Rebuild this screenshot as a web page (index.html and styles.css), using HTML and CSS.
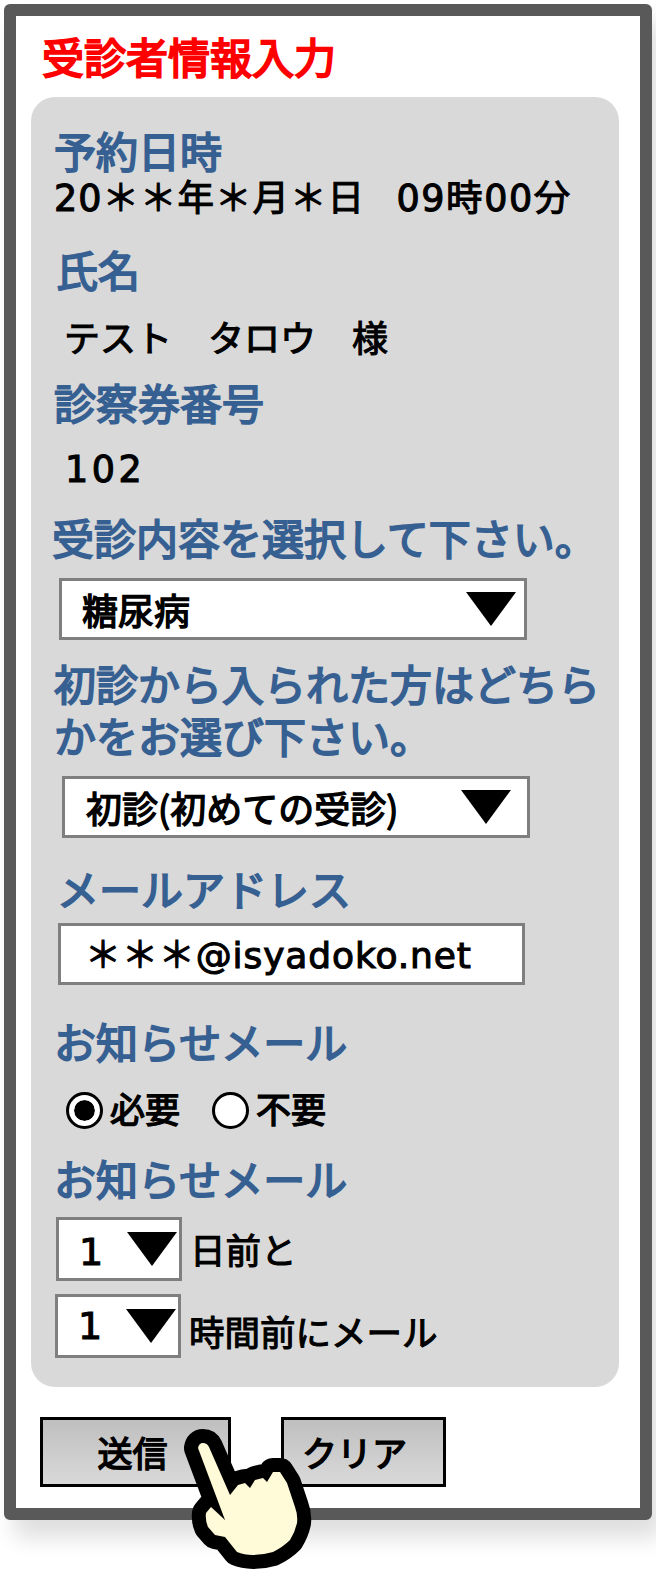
FILE: index.html
```html
<!doctype html>
<html lang="ja">

<head>
  <title>受診者情報入力</title>
  <meta charset="utf-8">
  <meta name="viewport" content="width=device-width, initial-scale=1">
  <link rel="stylesheet" href="styles.css">
</head>

<body>
  <div class="frame">
    <div class="title">受診者情報入力</div>

    <div class="panel">
      <div class="label">予約日時</div>
      <div class="value value-date">20＊＊年＊月＊日　<span class="value-time">09時00分</span></div>

      <div class="label label-name">氏名</div>
      <div class="value value-name">テスト　タロウ　様</div>

      <div class="label label-card">診察券番号</div>
      <div class="value value-card">102</div>

      <div class="label label-type">受診内容を選択して下さい。</div>
      <div class="select select-type">
        <span class="select-text">糖尿病</span>
        <span class="arrow"></span>
      </div>

      <div class="label label-first">初診から入られた方はどちら<br>かをお選び下さい。</div>
      <div class="select select-first">
        <span class="select-text">初診(初めての受診)</span>
        <span class="arrow"></span>
      </div>

      <div class="label label-mail">メールアドレス</div>
      <div class="input">＊＊＊@isyadoko.net</div>

      <div class="label label-notice">お知らせメール</div>
      <div class="radios">
        <span class="radio radio-on"></span>
        <span class="radio-text">必要</span>
        <span class="radio radio-off"></span>
        <span class="radio-text">不要</span>
      </div>

      <div class="label label-when">お知らせメール</div>
      <div class="when when-days">
        <div class="select select-small">
          <span class="select-num">1</span>
          <span class="arrow"></span>
        </div>
        <span class="when-text">日前と</span>
      </div>
      <div class="when when-hours">
        <div class="select select-small">
          <span class="select-num">1</span>
          <span class="arrow"></span>
        </div>
        <span class="when-text">時間前にメール</span>
      </div>
    </div>

    <div class="buttons">
      <div class="button button-send">送信</div>
      <div class="button button-clear">クリア</div>
    </div>

    <svg class="hand" width="140" height="155" viewBox="0 0 140 155">
      <path class="hand-shape" d="M18 28 Q19 23 23 23 Q27 23 29 27 L50 75 L58 65 L65 63 L70 68 L75 60 L83 58 L87 62 L93 52 L100 52 L107 63 L115 87 Q118 95 117 103 Q115 112 110 120 Q103 127 93 132 Q83 135 73 135 Q64 135 57 132 L45 117 L35 115 L28 107 Q25 100 26 93 L31 87 L45 100 Z" />
    </svg>
  </div>
</body>

</html>
```

FILE: styles.css
```css
body {
  margin: 0;
  padding: 0;
  min-height: 1585px;
  background-color: #ffffff;
  font-family: "Noto Sans CJK JP", sans-serif;
  color: #000000;
}

.frame {
  position: relative;
  box-sizing: border-box;
  width: 648px;
  height: 1516px;
  margin: 4px 0 0 4px;
  border: 12px solid #595959;
  border-radius: 6px;
  background-color: #ffffff;
  box-shadow: 10px 18px 22px rgba(0, 0, 0, 0.13);
}

.title {
  margin: 13px 0 0 26px;
  padding-bottom: 4px;
  font-size: 42px;
  line-height: 54px;
  font-weight: 400;
  -webkit-text-stroke: 2px #ff0000;
  color: #ff0000;
}

.panel {
  box-sizing: border-box;
  width: 588px;
  height: 1290px;
  margin: 10px 0 0 15px;
  padding: 31px 0 0 23px;
  background-color: #d9d9d9;
  border-radius: 24px;
}

.label {
  padding-bottom: 4px;
  font-size: 42px;
  line-height: 44px;
  font-weight: 400;
  -webkit-text-stroke: 1.8px #376092;
  color: #376092;
  white-space: nowrap;
}

.label-name {
  margin: 26px 0 0 2px;
}

.label-card {
  margin-top: 18px;
}

.label-type {
  margin: 24px 0 0 -2px;
  font-size: 42px;
}

.label-first {
  margin-top: 17px;
  line-height: 52px;
  padding-bottom: 5px;
}

.label-mail {
  margin: 28px 0 0 3px;
}

.label-notice {
  margin-top: 34px;
}

.label-when {
  margin-top: 27px;
}

.value {
  font-family: "DejaVu Sans", "Noto Sans CJK JP", sans-serif;
  font-size: 36.5px;
  line-height: 44px;
  letter-spacing: 1px;
  -webkit-text-stroke: 1.1px #000000;
  white-space: nowrap;
}

.value-date {
  margin-top: 1px;
}

.value-time {
  margin-left: -6px;
  letter-spacing: 1.6px;
}

.value-name {
  margin: 23px 0 0 10px;
  font-size: 36px;
  letter-spacing: 0;
}

.value-card {
  margin: 20px 0 -1px 11px;
  letter-spacing: 3.5px;
}

.select {
  box-sizing: border-box;
  display: flex;
  align-items: center;
  justify-content: space-between;
  height: 62px;
  border: 3px solid #7f7f7f;
  background-color: #ffffff;
}

.select-type {
  width: 468px;
  margin: 15px 0 0 5px;
  padding: 0 8px 0 20px;
}

.select-first {
  width: 468px;
  margin: 10px 0 0 8px;
  padding: 0 16px 0 21px;
}

.select-text {
  font-size: 36px;
  -webkit-text-stroke: 1.4px #000000;
  white-space: nowrap;
}

.select-small {
  flex-shrink: 0;
  width: 126px;
  height: 64px;
  padding: 0 2px 0 20px;
}

.select-num {
  font-family: "DejaVu Sans", sans-serif;
  font-size: 38px;
  -webkit-text-stroke: 1.1px #000000;
}

.when-days .select-num {
  position: relative;
  top: 3px;
}

.arrow {
  width: 0;
  height: 0;
  border-left: 25.5px solid transparent;
  border-right: 25.5px solid transparent;
  border-top: 34px solid #000000;
}

.input {
  box-sizing: border-box;
  width: 467px;
  height: 62px;
  margin: 9px 0 0 4px;
  padding-left: 24px;
  border: 3px solid #7f7f7f;
  background-color: #ffffff;
  font-family: "DejaVu Sans", "Noto Sans CJK JP", sans-serif;
  font-size: 36px;
  line-height: 60px;
  letter-spacing: 0.9px;
  -webkit-text-stroke: 1.1px #000000;
  white-space: nowrap;
}

.radios {
  display: flex;
  align-items: center;
  height: 37px;
  margin: 25px 0 0 12px;
}

.radio {
  box-sizing: border-box;
  flex-shrink: 0;
  width: 37px;
  height: 37px;
  border-radius: 50%;
  background-color: #ffffff;
  border: 3px solid #000000;
}

.radio-on {
  padding: 5px;
  background-clip: content-box;
  background-color: #000000;
  box-shadow: inset 0 0 0 5px #ffffff;
}

.radio-off {
  margin-left: 32px;
}

.radio-text {
  margin: -7px 0 0 7px;
  font-size: 35px;
  -webkit-text-stroke: 1.4px #000000;
  line-height: 37px;
}

.when {
  display: flex;
  align-items: center;
}

.when-days {
  margin: 13px 0 0 2px;
}

.when-hours {
  margin: 13px 0 0 1px;
}

.when-text {
  margin-left: 8px;
  font-size: 35.5px;
  -webkit-text-stroke: 1.1px #000000;
  white-space: nowrap;
}

.when-days .when-text {
  position: relative;
  top: -1px;
}

.when-hours .when-text {
  position: relative;
  top: 4px;
}

.buttons {
  display: flex;
  margin: 30px 0 0 24px;
  gap: 50px;
}

.button {
  box-sizing: border-box;
  height: 70px;
  border: 3px solid #000000;
  background: linear-gradient(#bfbfbf, #d9d9d9);
  font-size: 35px;
  -webkit-text-stroke: 1.5px #000000;
  line-height: 64px;
  text-align: center;
}

.button-send {
  width: 191px;
  padding-right: 6px;
}

.button-clear {
  width: 165px;
  padding-right: 18px;
}

.hand {
  position: absolute;
  left: 164px;
  top: 1404px;
  overflow: visible;
  filter: blur(0.7px);
}

.hand-shape {
  fill: #fffbd9;
  stroke: #000000;
  stroke-width: 28px;
  stroke-linejoin: round;
  paint-order: stroke;
}
```
